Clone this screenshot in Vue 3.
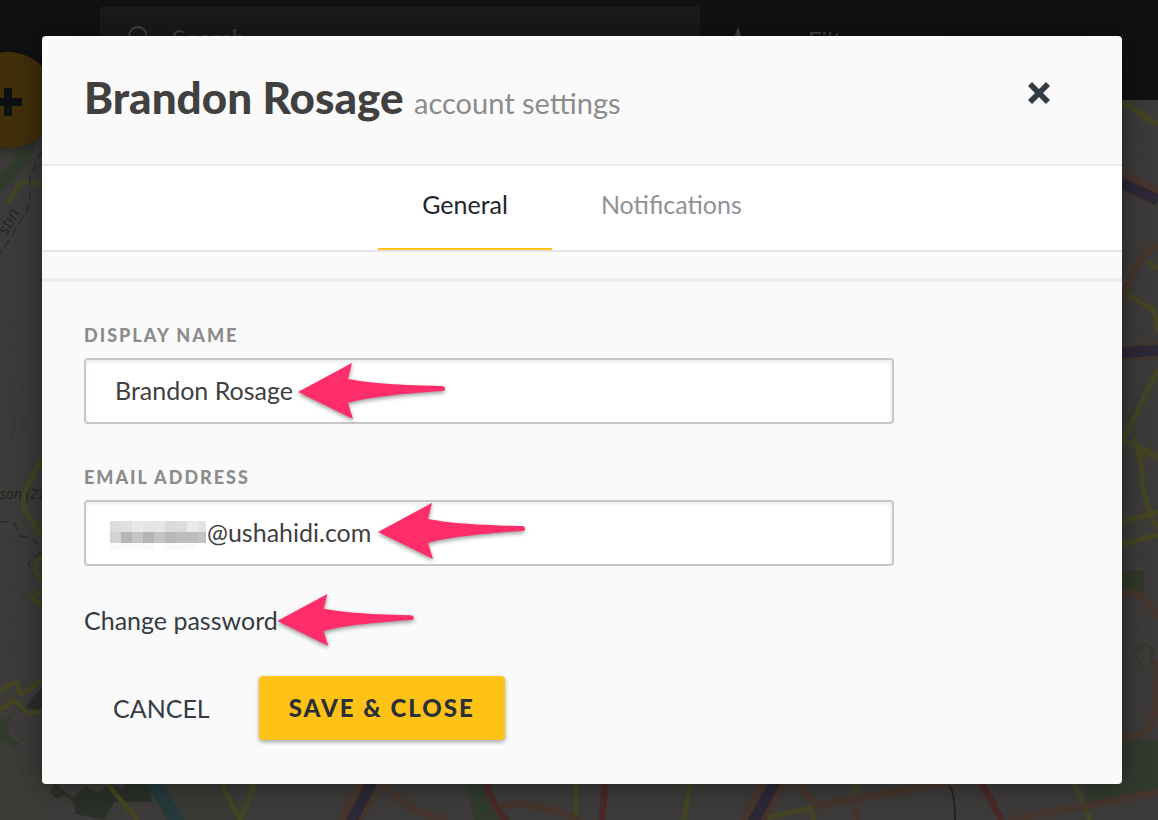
<script setup>
import { ref } from 'vue'

const displayName = ref('Brandon Rosage')
const email = ref('@ushahidi.com')

const mosaic = [
  ['#dcdcdc', '#e0e0e0', '#e9e9e9', '#e4e4e4', '#e6e6e6', '#dadada', '#dcdcdc', '#ebebeb', '#e3e3e3'],
  ['#d3d3d3', '#b6b6b6', '#c6c6c6', '#b4b4b4', '#c4c4c4', '#b7b7b7', '#bebebe', '#bdbdbd', '#c2c2c2'],
  ['#fafafa', '#fbfbfb', '#fbfbfb', '#fafafa', '#ffffff', '#fafafa', '#fafafa', '#fbfbfb', '#ffffff'],
]
const arrowShape =
  'M0 29 L54 0 L50 16 C66 19 90 22 144 23 Q147 23 147 26 Q147 28 144 28 C100 31 66 35 50 40 L55 56 Z'
</script>

<template>
  <div class="screen">
    <svg class="map" viewBox="0 0 1158 820" preserveAspectRatio="xMidYMid slice" aria-hidden="true">
      <rect width="1158" height="820" fill="#3d3b39" />
      <path d="M0 745 L42 770 V820 H0Z" fill="#3b3c36" />
      <path d="M160 780 H230 L245 820 H178Z" fill="#383a36" />
      <g fill="#323a2e">
        <path d="M22 100 H42 V128 L30 160 L0 194 V174 L14 160Z" />
        <path d="M42 688 L26 706 L20 712 L42 712Z" fill="#2b302b" />
        <path d="M14 712 L8 724 L10 738 L19 742 L16 749 L0 740 V722Z" />
        <path d="M56 780 L50 792 L56 799 L64 795 L74 803 L76 814 L104 820 L114 802 L152 802 L150 780 H128 L122 790 L112 784 L96 793 L86 786 L74 797 L62 790Z" fill="#2a3029" />
        <path d="M1122 571 H1144 V592 L1122 588Z" fill="#303829" />
        <path d="M1084 784 L1122 740 H1158 V794 L1088 806Z" />
        <path d="M466 780 H488 L502 820 H474Z" />
      </g>
      <g fill="none" stroke="#34383a" stroke-width="1">
        <path d="M0 316 Q14 326 27 327 T42 335 M42 344 L32 338 L22 346 L8 352 L2 368 L12 377 L28 374 L42 384 M12 377 L6 395 L14 415 L12 438 L30 454 M42 398 L30 390 L18 392 L10 402 L22 416 L24 434 L42 448 M18 420 a5 6 0 1 0 6 0" />
        <path d="M0 555 L12 540 L26 544 L42 540 M0 596 L14 588 L34 604 L42 600 M7 626 L20 615 L30 622 L29 650 L36 678 M0 642 L9 640 L13 650 L6 660 L0 654" />
        <path d="M0 765 L42 790 M0 797 L20 770 M16 806 L38 776 M0 780 L60 818" stroke="#46403b" />
        <path d="M12 718 L28 712 L42 732 M8 732 L22 743 L32 739 L42 753" stroke="#4b423c" />
        <path d="M1122 112 L1136 122 L1154 148 L1140 158 L1130 150 L1122 134 M1128 124 L1150 152 M1122 236 L1132 250 L1122 268 M1130 268 L1158 278 M1124 322 L1158 340" />
        <path d="M1122 372 L1158 402 M1124 394 L1158 418 M1132 418 L1154 430 M1140 390 L1130 422 M1124 495 L1158 478 M1126 504 L1158 490 M1122 548 L1144 560 L1158 552 M1126 635 L1140 624 L1158 612" />
        <path d="M1132 654 L1144 644 L1154 650 L1150 660 L1158 666 M1136 656 L1144 670" stroke="#34392f" stroke-width="3" />
        <path d="M250 815 L276 788 L300 803 M276 784 L310 820 M510 788 L560 802 M520 784 V820 M540 784 V816 M602 800 H690 M650 784 V820 M672 784 V820 M712 784 L700 820 M880 816 L896 800 H930 V812 M970 784 L960 820 M1000 784 L1070 800 M1030 784 L1060 820" stroke="#403d3a" />
        <path d="M948 784 Q955 790 955 820" stroke="#242422" stroke-width="2" />
      </g>
      <g fill="none" stroke="#434523" stroke-width="5">
        <path d="M8 203 L20 184 Q30 178 42 186" />
        <path d="M42 460 Q20 496 24 508 L42 536 M42 554 Q30 570 42 580 M42 590 L32 598 L42 604 M0 692 Q18 676 19 688 Q16 702 42 680 M0 710 L14 700 L26 712 L42 712 M108 784 L122 802 L138 820 M222 784 L240 820 L255 784" />
        <path d="M1122 102 L1158 124 M1148 261 L1158 269 M1128 295 L1154 310 L1158 332 M1158 370 L1124 438 M1122 440 L1158 456 M1134 438 L1142 460 M1137 450 Q1144 472 1142 484 L1152 520 L1158 528 M1140 450 L1158 458 M1122 522 L1158 512 M1122 544 L1158 535" />
        <path d="M576 784 V820 M690 784 L684 820 M766 818 L810 808 L814 820 M860 784 L852 796 M1074 784 L1090 820" />
      </g>
      <g fill="none" stroke="#45352d" stroke-width="7">
        <path d="M1122 180 L1158 197" stroke-width="18" />
        <path d="M1122 353 L1158 350" stroke-width="17" stroke="#41372f" />
        <path d="M1158 246 Q1140 254 1136 270 L1120 300" />
        <path d="M1122 594 H1136 Q1148 598 1158 618 M1158 660 Q1158 710 1150 725 Q1144 737 1122 737" />
        <path d="M384 784 Q405 812 446 820 M496 808 Q520 796 580 820 M798 784 L818 806 Q840 802 950 782 M854 806 L858 820 M1010 820 L1158 792" />
        <path d="M372 780 L348 824 M776 780 L750 824" stroke-width="24" />
      </g>
      <path d="M1122 183 L1158 200 M1122 353 L1158 350 M373 780 L350 824 M776 780 L752 824" fill="none" stroke="#2c2836" stroke-width="11" />
      <path d="M152 780 L178 824" fill="none" stroke="#24393b" stroke-width="14" />
      <path d="M486 780 Q490 804 508 822 M605 784 L602 820 M982 784 L1002 820" fill="none" stroke="#4a2828" stroke-width="7" />
      <path d="M42 150 L30 178 L30 204 L12 236 L0 254 M0 522 H14 L20 536 L32 538 L42 548 M42 552 L28 564 L34 574" fill="none" stroke="#2c2f31" stroke-width="2" stroke-dasharray="9 5" />
      <text class="map-label" transform="translate(7 236) rotate(-62)">stin</text>
      <text class="map-label small" x="0" y="499">son (27</text>
    </svg>

    <div class="topbar" aria-hidden="true">
      <div class="search">
        <svg width="24" height="24" viewBox="0 0 22 22" fill="none" stroke="#444" stroke-width="2">
          <circle cx="9" cy="9" r="8" /><path d="M14 14 L21 21" />
        </svg>
        <span>Search</span>
      </div>
      <div class="pin">
        <svg width="28" height="28" viewBox="0 0 20 20"><path d="M10 0 L13 8 H20 L15 13 L17 20 L10 16 L3 20 L5 13 L0 8 H7Z" fill="#444" /></svg>
      </div>
      <div class="filters">Filters</div>
    </div>
    <div class="add" aria-hidden="true">
      <svg width="28" height="28" viewBox="0 0 28 28"><path d="M10 0 H18 V10 H28 V18 H18 V28 H10 V18 H0 V10 H10Z" fill="#0e1114" /></svg>
    </div>

    <main class="modal" role="dialog" aria-labelledby="title">
      <header class="header">
        <h1 id="title">Brandon Rosage <small>account settings</small></h1>
        <button class="close" type="button" aria-label="Close">
          <svg width="22" height="22" viewBox="0 0 22 22"><path d="M4 0 L11 7 L18 0 L22 4 L15 11 L22 18 L18 22 L11 15 L4 22 L0 18 L7 11 L0 4Z" fill="#343b43" /></svg>
        </button>
      </header>

      <nav class="tabs">
        <a class="tab active" href="#general">General</a>
        <a class="tab" href="#notifications">Notifications</a>
      </nav>

      <form class="form" @submit.prevent>
        <div class="field">
          <label for="display-name">Display name</label>
          <input id="display-name" v-model="displayName" type="text" />
          <svg class="arrow arrow-name" width="148" height="56" viewBox="0 0 148 56" aria-hidden="true"><path :d="arrowShape" /></svg>
        </div>
        <div class="field">
          <label for="email">Email address</label>
          <input id="email" v-model="email" class="masked" type="text" />
          <svg class="mosaic" width="96" height="29" viewBox="0 0 96 29" shape-rendering="crispEdges" aria-hidden="true">
            <template v-for="(row, r) in mosaic" :key="r">
              <rect v-for="(fill, c) in row" :key="c" :x="c * 11" :y="r * 11" width="11" height="11" :fill="fill" />
            </template>
          </svg>
          <svg class="arrow arrow-email" width="148" height="56" viewBox="0 0 148 56" aria-hidden="true"><path :d="arrowShape" /></svg>
        </div>
        <div class="password">
          <a href="#password">Change password</a>
          <svg class="arrow arrow-password" width="138" height="52" viewBox="0 0 148 56" aria-hidden="true"><path :d="arrowShape" /></svg>
        </div>
        <div class="actions">
          <button class="cancel" type="button">CANCEL</button>
          <button class="save" type="submit">SAVE &amp; CLOSE</button>
        </div>
      </form>
    </main>
  </div>
</template>

<style>
body {
  margin: 0;
  background: #3d3b39;
}
</style>

<style scoped>
* {
  box-sizing: border-box;
}
.screen {
  position: relative;
  min-height: 100vh;
  padding: 36px 36px 36px 42px;
  overflow: hidden;
  font-family: Lato, "Liberation Sans", sans-serif;
  font-size: 25px;
  line-height: 32px;
  color: #404040;
}
.map {
  position: absolute;
  inset: 0;
  width: 100%;
  height: 100%;
}
.map-label {
  font-family: "Noto Sans", sans-serif;
  font-size: 17px;
  font-style: italic;
  fill: #20282c;
}
.map-label.small {
  font-size: 14px;
  fill: #24231f;
}
.topbar {
  position: absolute;
  inset: 0 0 auto;
  display: flex;
  height: 100px;
  padding: 6px 0 24px 100px;
  background: #0f1113;
  color: #444;
  font-size: 24px;
}
.search {
  display: flex;
  align-items: center;
  gap: 20px;
  width: 600px;
  padding: 0 0 6px 28px;
  border-radius: 4px 0 0 0;
  background: #191a1b;
  font-size: 25px;
}
.pin {
  display: grid;
  place-items: center;
  width: 78px;
  border-right: 2px solid #0f1011;
  background: #111213;
}
.filters {
  width: 162px;
  padding: 18px 30px;
  background: #111213;
}
.add {
  position: absolute;
  top: 52px;
  left: -40px;
  display: grid;
  place-items: center;
  width: 96px;
  height: 96px;
  padding-top: 4px;
  border-radius: 50%;
  background: #412f0b;
  box-shadow: 0 4px 8px rgba(0, 0, 0, 0.3);
}
.modal {
  position: relative;
  border-radius: 4px;
  background: #fafafa;
  box-shadow: 0 0 28px rgba(0, 0, 0, 0.45);
}
.header {
  display: flex;
  justify-content: space-between;
  align-items: flex-start;
  padding: 34px 72px 40px 42px;
  border-bottom: 2px solid #ebebeb;
}
h1 {
  margin: 0;
  font-size: 44px;
  line-height: 54px;
  font-weight: 900;
}
h1 small {
  font-size: 29px;
  line-height: 32px;
  font-weight: 400;
  color: #8c8c8c;
}
button {
  border: 0;
  padding: 0;
  background: none;
  color: #343b43;
  font: inherit;
}
.close {
  display: flex;
  padding: 12px 0;
}
.tabs {
  display: flex;
  justify-content: center;
  gap: 5px;
  border-bottom: 2px solid #e6e6e6;
  background: #fff;
}
.tab {
  padding: 22px 44px 28px;
  border-bottom: 2px solid transparent;
  color: #8f9297;
  text-decoration: none;
}
.tab.active {
  border-color: #ffc317;
  color: #21252b;
}
.form {
  margin-top: 26px;
  padding: 42px 42px 44px;
  border-top: 4px solid #ededed;
}
.field {
  position: relative;
  max-width: 810px;
  margin-bottom: 42px;
}
label {
  display: block;
  margin-bottom: 12px;
  color: #8c8c8c;
  font-size: 18px;
  line-height: 22px;
  font-weight: 900;
  letter-spacing: 2px;
  text-transform: uppercase;
}
input {
  display: block;
  width: 100%;
  height: 66px;
  padding: 0 29px 2px;
  border: 2px solid #c8c8c8;
  border-radius: 4px;
  background: #fff;
  box-shadow: inset 0 2px 4px rgba(0, 0, 0, 0.08);
  color: #404040;
  font: inherit;
}
.masked {
  padding-left: 121px;
}
.mosaic {
  position: absolute;
  top: 55px;
  left: 26px;
}
.arrow {
  position: absolute;
  overflow: visible;
  fill: #ff2e6b;
  filter: drop-shadow(0 2px 2px rgba(0, 0, 0, 0.4));
}
.arrow-name {
  top: 39px;
  left: 214px;
}
.arrow-email {
  top: 37px;
  left: 294px;
}
.password {
  position: relative;
  margin-bottom: 44px;
  line-height: 24px;
}
.password a {
  color: #343b43;
  text-decoration: none;
}
.arrow-password {
  top: -14px;
  left: 193px;
}
.actions {
  display: flex;
  gap: 20px;
}
.actions button {
  height: 64px;
  padding: 0 29px;
  border-radius: 4px;
}
.actions .save {
  padding: 0 30px;
  background: #ffc317;
  box-shadow: 0 2px 4px rgba(0, 0, 0, 0.35);
  color: #2b3036;
  font-size: 24px;
  font-weight: 900;
  letter-spacing: 2px;
}
</style>
